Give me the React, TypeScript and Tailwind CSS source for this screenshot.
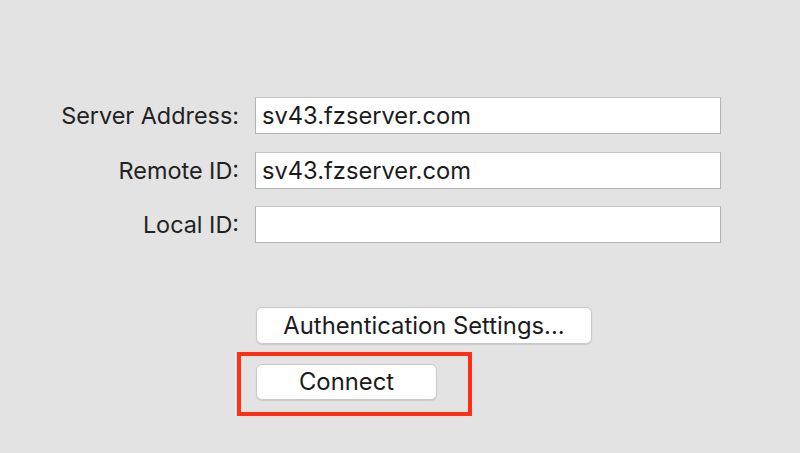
import React from 'react';

const font = { fontFamily: 'Inter, "Noto Sans", "Liberation Sans", sans-serif' };

function Field({ label, value }: { label: string; value: string }) {
  return (
    <div className="flex items-center h-[37px]">
      <label className="w-[240px] shrink-0 text-right text-[23.4px] text-[#222222] pr-[1px] pt-[1px]">{label}</label>
      <div className="ml-[15px] w-[466px] h-[37px] bg-white border border-[#b3b3b3] border-t-[#c6c6c6] flex items-center pl-[6px] pt-[1px] text-[23.7px] text-[#1c1c1c]">
        {value}
      </div>
    </div>
  );
}

export default function App() {
  return (
    <div className="w-[800px] h-[453px] bg-[#e3e3e3] overflow-hidden" style={font}>
      {/* Form rows */}
      <div className="pt-[97px] flex flex-col gap-[17.5px]">
        <Field label="Server Address:" value="sv43.fzserver.com" />
        <Field label="Remote ID:" value="sv43.fzserver.com" />
        <Field label="Local ID:" value="" />
      </div>

      {/* Buttons */}
      <div className="mt-[64px] pl-[256px] flex flex-col items-start">
        <button className="w-[336px] h-[37px] bg-white rounded-[6px] border border-[#c9c9c9] shadow-[0_1px_1px_rgba(0,0,0,0.12)] text-[23.8px] text-[#1c1c1c] flex items-center justify-center">
          Authentication Settings...
        </button>
        <div className="-ml-[19px] mt-[8px] w-[235px] h-[64px] border-[4px] border-[#ff2e14] pl-[15px] pt-[8px]">
          <button className="w-[181px] h-[36px] bg-white rounded-[6px] border border-[#c9c9c9] shadow-[0_1px_1px_rgba(0,0,0,0.12)] text-[23.8px] text-[#1c1c1c] flex items-center justify-center">
            Connect
          </button>
        </div>
      </div>
    </div>
  );
}
